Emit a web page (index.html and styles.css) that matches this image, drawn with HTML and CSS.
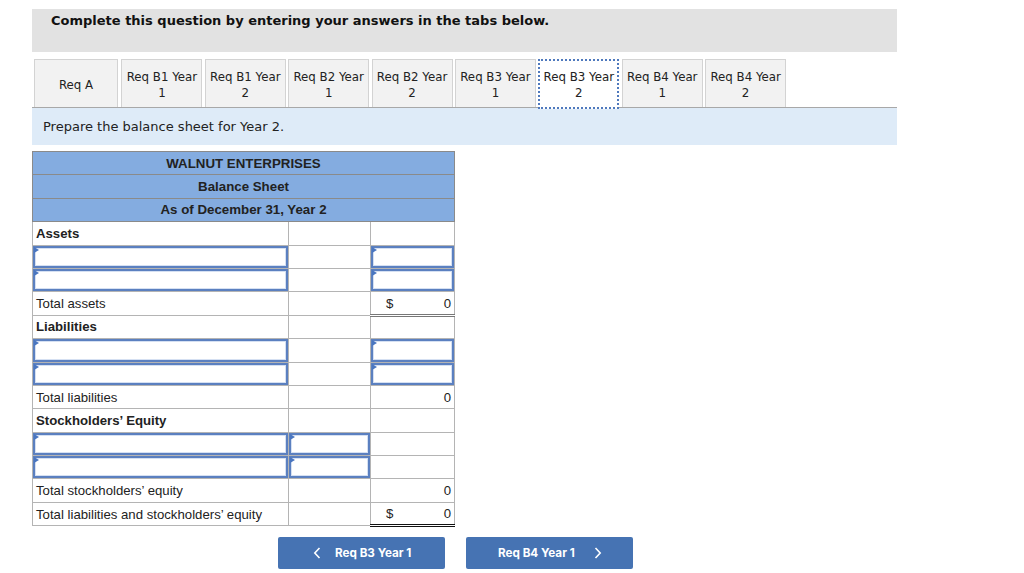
FILE: index.html
```html
<!DOCTYPE html>
<html>
<head>
<meta charset="utf-8">
<link rel="stylesheet" href="styles.css">
</head>
<body>
<div class="page">
  <div class="instr">Complete this question by entering your answers in the tabs below.</div>
  <div class="tabs">
    <div class="tab tab-a">Req A</div>
    <div class="tab">Req B1 Year<br>1</div>
    <div class="tab">Req B1 Year<br>2</div>
    <div class="tab">Req B2 Year<br>1</div>
    <div class="tab">Req B2 Year<br>2</div>
    <div class="tab">Req B3 Year<br>1</div>
    <div class="tab active">Req B3 Year<br>2</div>
    <div class="tab">Req B4 Year<br>1</div>
    <div class="tab">Req B4 Year<br>2</div>
  </div>
  <div class="prompt">Prepare the balance sheet for Year 2.</div>
  <table class="bs">
    <colgroup><col class="c1"><col class="c2"><col class="c3"></colgroup>
    <tr class="hd"><td colspan="3">WALNUT ENTERPRISES</td></tr>
    <tr class="hd"><td colspan="3">Balance Sheet</td></tr>
    <tr class="hd"><td colspan="3">As of December 31, Year 2</td></tr>
    <tr><td class="lbl b">Assets</td><td></td><td></td></tr>
    <tr><td class="in"><div class="box"></div></td><td></td><td class="in"><div class="box"></div></td></tr>
    <tr><td class="in"><div class="box"></div></td><td></td><td class="in"><div class="box"></div></td></tr>
    <tr><td class="lbl">Total assets</td><td></td><td class="amt top-black bot-double"><span>$</span><span>0</span></td></tr>
    <tr><td class="lbl b">Liabilities</td><td></td><td></td></tr>
    <tr><td class="in"><div class="box"></div></td><td></td><td class="in"><div class="box"></div></td></tr>
    <tr><td class="in"><div class="box"></div></td><td></td><td class="in"><div class="box"></div></td></tr>
    <tr><td class="lbl">Total liabilities</td><td></td><td class="amt"><span></span><span>0</span></td></tr>
    <tr><td class="lbl b">Stockholders’ Equity</td><td></td><td></td></tr>
    <tr><td class="in"><div class="box"></div></td><td class="in"><div class="box"></div></td><td></td></tr>
    <tr><td class="in"><div class="box"></div></td><td class="in"><div class="box"></div></td><td></td></tr>
    <tr><td class="lbl">Total stockholders’ equity</td><td class="top-black"></td><td class="amt"><span></span><span>0</span></td></tr>
    <tr><td class="lbl">Total liabilities and stockholders’ equity</td><td></td><td class="amt top-dark bot-double-black"><span>$</span><span>0</span></td></tr>
  </table>
  <div class="nav">
    <div class="btn prev">
      <svg width="8" height="12" viewBox="0 0 8 12"><path d="M6.5 1 L1.8 6 L6.5 11" fill="none" stroke="#fff" stroke-width="1.6"/></svg>
      <span>Req B3 Year 1</span>
    </div>
    <div class="btn next">
      <span>Req B4 Year 1</span>
      <svg width="8" height="12" viewBox="0 0 8 12"><path d="M1.5 1 L6.2 6 L1.5 11" fill="none" stroke="#fff" stroke-width="1.6"/></svg>
    </div>
  </div>
</div>
</body>
</html>
```

FILE: styles.css
```css
html, body {
  margin: 0;
  padding: 0;
  background: #fff;
}
body {
  font-family: "DejaVu Sans", Verdana, sans-serif;
  color: #222;
}
.page {
  padding: 9px 0 0 32px;
  width: 865px;
}
.instr {
  background: #e2e2e2;
  height: 43px;
  box-sizing: border-box;
  padding: 2px 19px 0;
  font-size: 13px;
  font-weight: bold;
  line-height: 20px;
  color: #111;
}
.tabs {
  margin-top: 7px;
  padding-left: 2px;
  display: flex;
  gap: 2.4px;
  border-bottom: 1px solid #a8a8a8;
  height: 48px;
}
.tab {
  width: 81px;
  height: 48px;
  box-sizing: border-box;
  background: #f2f2f2;
  border: 1px solid #d3d3d3;
  border-bottom: none;
  font-size: 11.8px;
  line-height: 16px;
  padding-top: 2px;
  text-align: center;
  display: flex;
  align-items: center;
  justify-content: center;
  color: #222;
  white-space: nowrap;
}
.tab-a {
  width: 84px;
  margin-right: 1px;
}
.active {
  background: #fff;
  border: 2px dotted #4f79bd;
  height: 50px;
  position: relative;
  z-index: 1;
}
.prompt {
  background: #deebf8;
  height: 37px;
  box-sizing: border-box;
  padding-left: 11px;
  font-size: 13px;
  line-height: 37px;
  color: #222;
}
.bs {
  margin-top: 6px;
  border-collapse: collapse;
  width: 422px;
  table-layout: fixed;
  font-family: "Liberation Sans", Arial, sans-serif;
  font-size: 13.2px;
  color: #222;
  border: 1px solid #808080;
}
.c1 { width: 256px; }
.c2 { width: 82px; }
.c3 { width: 84px; }
.bs tr { height: 23.4px; }
.bs td {
  border: 1px solid #b4b4b4;
  padding: 0;
  vertical-align: middle;
}
.bs .hd td {
  background: #84ace0;
  border: 1px solid #8a8a8a;
  text-align: center;
  font-weight: bold;
  font-size: 13.3px;
}
.lbl {
  padding-left: 3px !important;
  white-space: nowrap;
}
.b { font-weight: bold; }
.in {
  position: relative;
}
.box {
  position: absolute;
  left: 0;
  right: 0;
  top: 0;
  bottom: 0;
  border: 2px solid #5b80c0;
  box-shadow: inset 0 0 0 1px #d5e0f2;
  background: #fff;
}
.box::before {
  content: "";
  position: absolute;
  left: -1px;
  top: -1px;
  border-top: 3.5px solid transparent;
  border-bottom: 3.5px solid transparent;
  border-left: 5px solid #4a76c0;
}
.amt span:first-child {
  padding-left: 15px;
}
.amt {
  padding-right: 3px !important;
}
.amt span:last-child {
  float: right;
}
.bs td.top-black { border-top: 1px solid #111; }
.bs td.top-dark { border-top: 1px solid #666; }
.bs td.bot-double { border-bottom: 3px double #777; }
.bs td.bot-double-black { border-bottom: 3px double #111; }
.nav {
  margin-top: 10px;
  padding-left: 246px;
  display: flex;
  gap: 21px;
}
.btn {
  width: 167px;
  height: 32px;
  background: #4673b3;
  border-radius: 2px;
  color: #fff;
  font-family: Inter, Roboto, sans-serif;
  font-weight: bold;
  font-size: 11.7px;
  display: flex;
  align-items: center;
  box-sizing: border-box;
}
.prev { padding-left: 35px; }
.prev svg { margin-right: 14px; }
.next { padding-left: 32px; }
.next svg { margin-left: 19px; }
```
